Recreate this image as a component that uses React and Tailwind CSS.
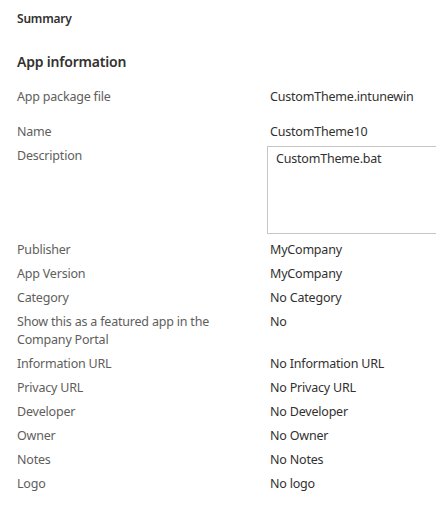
const rows = [
  ["Publisher", "MyCompany"],
  ["App Version", "MyCompany"],
  ["Category", "No Category"],
  ["Show this as a featured app in the Company Portal", "No"],
  ["Information URL", "No Information URL"],
  ["Privacy URL", "No Privacy URL"],
  ["Developer", "No Developer"],
  ["Owner", "No Owner"],
  ["Notes", "No Notes"],
  ["Logo", "No logo"],
];

function Row({ label, children, className = "" }) {
  return (
    <div className={`flex py-[3px] leading-[18px] ${className}`}>
      <div className="w-[253px] shrink-0 pr-[36px] text-[#605e5c]">{label}</div>
      <div className="flex-1 text-[#323130]">{children}</div>
    </div>
  );
}

export default function App() {
  return (
    <div
      className="min-h-screen w-[436px] overflow-hidden bg-white pl-[17px] text-[12.5px] tracking-[-0.2px]"
      style={{ fontFamily: '"Noto Sans", "Open Sans", sans-serif' }}
    >
      <h2 className="pt-[11px] text-[12px] font-semibold leading-4 text-[#323130]">Summary</h2>
      <h3 className="mt-[25px] text-[14px] font-semibold leading-5 text-[#323130]">App information</h3>

      <Row label="App package file" className="mt-[13px] mb-[11px]">
        CustomTheme.intunewin
      </Row>
      <Row label="Name">CustomTheme10</Row>
      <Row label="Description">
        <div className="-ml-[3px] -mt-[1px] mb-[1px] h-[88px] w-[200px] border border-[#c8c6c4] px-[8px] pt-[3px]">
          CustomTheme.bat
        </div>
      </Row>
      {rows.map(([label, value]) => (
        <Row key={label} label={label}>
          {value}
        </Row>
      ))}
    </div>
  );
}
